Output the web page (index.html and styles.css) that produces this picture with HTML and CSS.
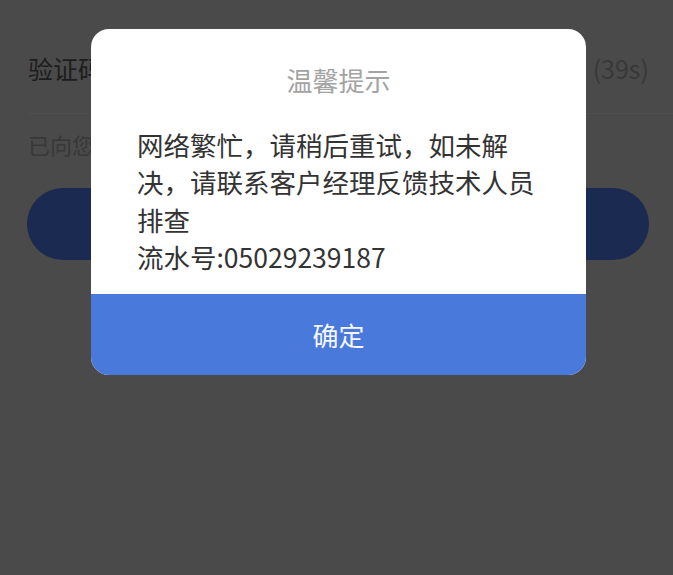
FILE: index.html
```html
<!DOCTYPE html>
<html lang="zh-CN">
<head>
  <meta charset="UTF-8">
  <meta name="viewport" content="width=device-width, initial-scale=1">
  <title>温馨提示</title>
  <link rel="stylesheet" href="styles.css">
</head>
<body>
  <div class="page">
    <div class="code-row">
      <span class="code-label">验证码</span>
      <span class="code-timer">(39s)</span>
    </div>
    <div class="divider"></div>
    <p class="code-hint">已向您发送</p>
    <button class="submit" type="button" aria-label="登录"></button>
  </div>

  <div class="dialog">
    <h2 class="dialog-title">温馨提示</h2>
    <div class="dialog-body">
      <p>网络繁忙，请稍后重试，如未解决，请联系客户经理反馈技术人员排查</p>
      <p>流水号:05029239187</p>
    </div>
    <button class="dialog-ok" type="button">确定</button>
  </div>
</body>
</html>
```

FILE: styles.css
```css
:root { --mask: #4a4a4a; --navy: #1a2a50; --blue: #4a79dc; --text: #333; }
* { box-sizing: border-box; }
html, body { margin:0; padding:0; }
body { width:673px; height:575px; overflow:hidden; background:var(--mask);
  font-family:"Noto Sans CJK SC", "Noto Sans", sans-serif; position:relative; }

.page { padding-top:48px; }
.code-row { display:flex; justify-content:space-between; align-items:center;
  height:40px; padding:0 24px 0 28px; }
.code-label { font-size:25px; color:#1d1d1d; }
.code-timer { font-size:25px; color:#383838; }
.divider { height:1px; margin:25px 0 0 28px; background:#4f4f4f; }
.code-hint { margin:16px 0 0 28px; font-size:22px; line-height:28px; color:#383838; }
.submit { display:block; height:72px; margin:30px 24px 0 27px; width:calc(100% - 51px);
  border:none; border-radius:36px; background:var(--navy); }

.dialog { position:absolute; left:91px; top:29px; width:495px; background:#fff;
  border-radius:18px; overflow:hidden; display:flex; flex-direction:column; }
.dialog-title { margin:0; padding-top:32px; text-align:center; font-size:26px;
  line-height:37px; font-weight:normal; color:#a3a3a3; }
.dialog-body { padding:28px 46px 19px; font-size:26.5px; line-height:37.3px; color:var(--text); }
.dialog-body p { margin:0; }
.dialog-ok { height:81px; border:none; background:var(--blue); color:#f4f7ff;
  font-family:inherit; font-size:26px; padding:0; }
```
